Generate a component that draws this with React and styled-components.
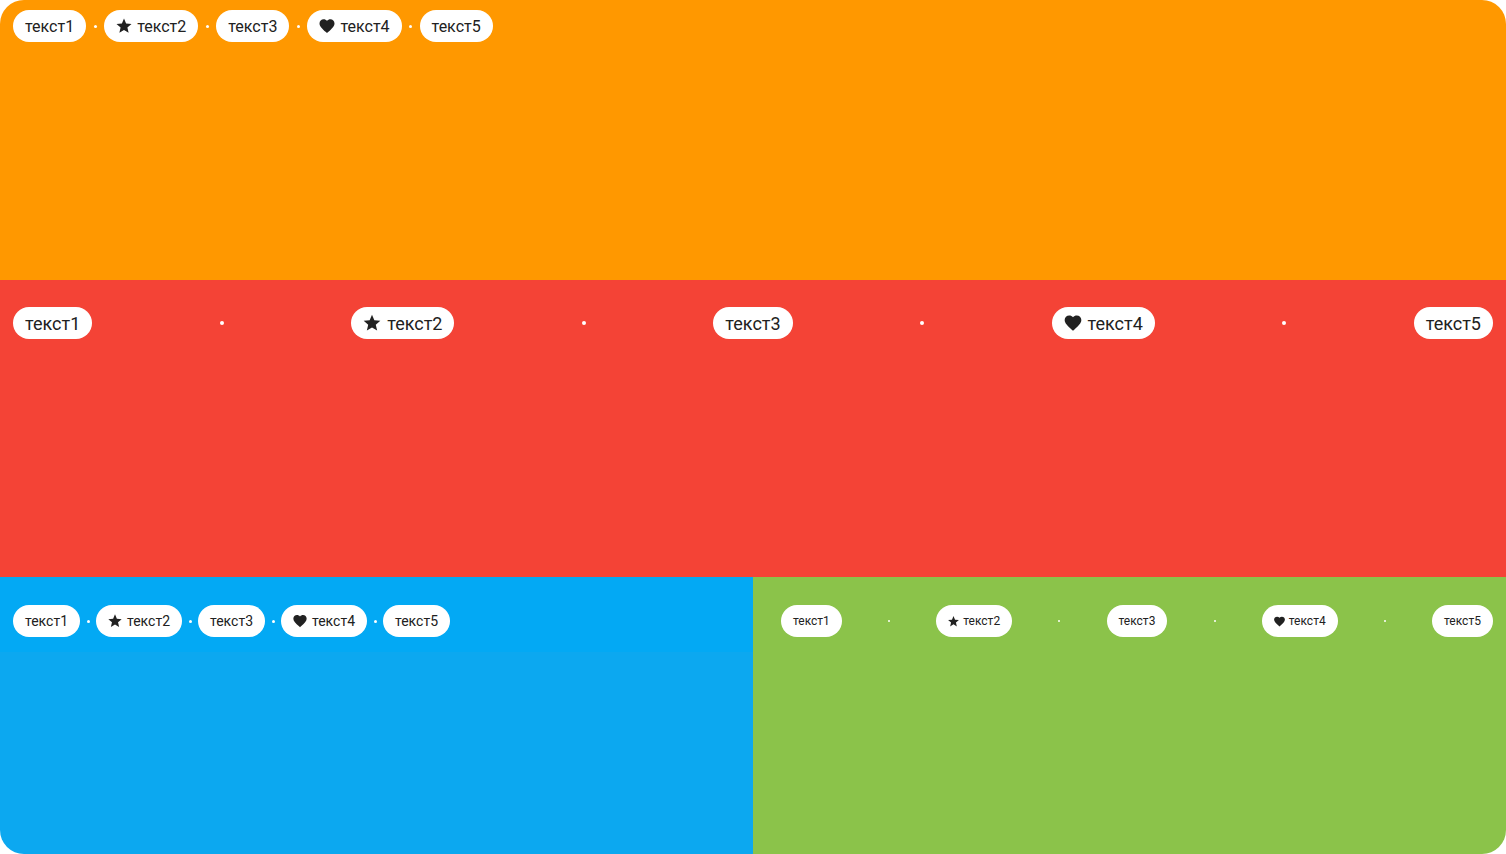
import React from "react";
import styled, { createGlobalStyle } from "styled-components";
import { MdStar, MdFavorite } from "react-icons/md";

const GlobalStyle = createGlobalStyle`
  html, body {
    margin: 0;
    padding: 0;
    background: #ffffff;
    font-family: Roboto, "Noto Sans", sans-serif;
  }
`;

const Frame = styled.div`
  height: 854px;
  border-radius: 24px;
  overflow: hidden;
  display: grid;
  grid-template-rows: 280px 297px 277px;
`;

const Panel = styled.section`
  background: ${(p) => p.$bg};
  display: flex;
  flex-direction: column;
`;

const Bottom = styled.div`
  display: grid;
  grid-template-columns: 1fr 1fr;
`;

const Row = styled.div`
  display: flex;
  align-items: center;
  justify-content: ${(p) => (p.$spread ? "space-between" : "flex-start")};
  padding: ${(p) => p.$pad};
  background: ${(p) => p.$bg || "transparent"};
`;

const Chip = styled.span`
  display: inline-flex;
  align-items: center;
  gap: ${(p) => Math.round(p.$size / 4)}px;
  height: 32px;
  padding: 0 12px;
  border-radius: 16px;
  background: #ffffff;
  color: #212121;
  font-size: ${(p) => p.$size}px;
  white-space: nowrap;

  svg {
    flex-shrink: 0;
    margin-left: -1px;
  }
`;

const Dot = styled.span`
  width: ${(p) => p.$d}px;
  height: ${(p) => p.$d}px;
  border-radius: 50%;
  background: #ffffff;
  margin: 0 ${(p) => p.$m}px;
  flex-shrink: 0;
`;

const items = [
  { label: "текст1" },
  { label: "текст2", icon: MdStar },
  { label: "текст3" },
  { label: "текст4", icon: MdFavorite },
  { label: "текст5" },
];

function ChipRow({ size, dot, margin, spread, pad, bg }) {
  return (
    <Row $spread={spread} $pad={pad} $bg={bg}>
      {items.map((it, i) => {
        const Icon = it.icon;
        return (
          <React.Fragment key={it.label}>
            {i > 0 && <Dot $d={dot} $m={spread ? 0 : margin} />}
            <Chip $size={size}>
              {Icon && <Icon size={Math.round(size * 1.12)} />}
              {it.label}
            </Chip>
          </React.Fragment>
        );
      })}
    </Row>
  );
}

export default function App() {
  return (
    <>
      <GlobalStyle />
      <Frame>
        <Panel $bg="#ff9800">
          <ChipRow size={16} dot={3} margin={7.5} pad="10px 13px" />
        </Panel>
        <Panel $bg="#f44336">
          <ChipRow size={18} dot={4} spread pad="27px 13px" />
        </Panel>
        <Bottom>
          <Panel $bg="#0ca8f0">
            <ChipRow size={14} dot={3} margin={6.5} pad="28px 13px 15px" bg="#03a9f4" />
          </Panel>
          <Panel $bg="#8bc34a">
            <ChipRow size={12} dot={2} spread pad="28px 13px 15px 28px" />
          </Panel>
        </Bottom>
      </Frame>
    </>
  );
}
